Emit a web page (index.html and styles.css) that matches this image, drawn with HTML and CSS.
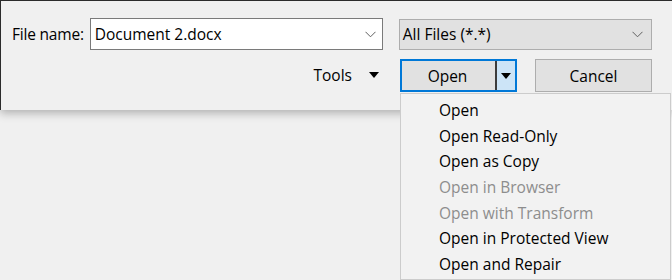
FILE: index.html
```html
<!DOCTYPE html>
<html lang="en">
<head>
    <meta charset="UTF-8">
    <title>Open</title>
    <link rel="stylesheet" href="styles.css">
</head>
<body>
    <div class="dialog">
        <div class="row">
            <label class="label" for="fileName">File name:</label>
            <div class="combo">
                <input type="text" id="fileName" value="Document 2.docx">
                <svg class="chevron" width="11" height="7" viewBox="0 0 11 7"><path d="M0.5 0.8 L5.5 5.8 L10.5 0.8" fill="none" stroke="#606060" stroke-width="1"/></svg>
            </div>
            <div class="filter">
                <span>All Files (*.*)</span>
                <svg class="chevron" width="11" height="7" viewBox="0 0 11 7"><path d="M0.5 0.8 L5.5 5.8 L10.5 0.8" fill="none" stroke="#606060" stroke-width="1"/></svg>
            </div>
        </div>
        <div class="row actions">
            <div class="tools">
                <span>Tools</span>
                <span class="caret"></span>
            </div>
            <div class="split">
                <span class="split-main">Open</span>
                <span class="split-arrow"><span class="caret"></span></span>
            </div>
            <button class="btn">Cancel</button>
        </div>
    </div>
    <ul class="menu">
        <li>Open</li>
        <li>Open Read-Only</li>
        <li>Open as Copy</li>
        <li class="disabled">Open in Browser</li>
        <li class="disabled">Open with Transform</li>
        <li>Open in Protected View</li>
        <li>Open and Repair</li>
    </ul>
</body>
</html>
```
FILE: styles.css
```css
* {
    margin: 0;
    padding: 0;
    box-sizing: border-box;
    font-family: "Open Sans", "Noto Sans", sans-serif;
}

body {
    width: 672px;
    height: 280px;
    background: #f0f0f0;
    color: #000;
    font-size: 15.5px;
    overflow: hidden;
    position: relative;
}

.dialog {
    height: 110px;
    background: #f0f0f0;
    border-top: 1px solid #2b2b2b;
    border-left: 1px solid #2b2b2b;
    box-shadow: 0 3px 9px rgba(0, 0, 0, 0.28);
    padding: 17px 20px 0 11px;
}

.row {
    display: flex;
    align-items: center;
}

.label {
    width: 78px;
    letter-spacing: -0.2px;
}

.combo {
    position: relative;
    width: 294px;
    height: 32px;
    border: 1px solid #7a7a7a;
    background: #fff;
}

.combo input {
    width: 100%;
    height: 100%;
    border: none;
    outline: none;
    padding: 0 28px 0 4px;
    font-size: 15.5px;
    background: transparent;
    color: #000;
}

.combo .chevron {
    position: absolute;
    right: 6px;
    top: 12px;
}

.filter {
    margin-left: 16px;
    width: 254px;
    height: 31px;
    border: 1px solid #adadad;
    background: #e1e1e1;
    display: flex;
    align-items: center;
    justify-content: space-between;
    padding: 0 8px 0 3px;
}

.actions {
    justify-content: flex-end;
    margin-top: 9px;
}

.tools {
    display: flex;
    align-items: center;
    gap: 17px;
    margin-right: 21px;
    padding-bottom: 1px;
}

.caret {
    width: 0;
    height: 0;
    border-left: 5px solid transparent;
    border-right: 5px solid transparent;
    border-top: 6px solid #000;
}

.split {
    display: flex;
    width: 117px;
    height: 33px;
    border: 2px solid #0078d7;
    background: #e1e1e1;
}

.split-main {
    flex: 1;
    display: flex;
    align-items: center;
    justify-content: center;
    border-right: 2px solid #3c3c3c;
    padding-right: 2px;
}

.split-arrow {
    width: 18px;
    background: #cce4f7;
    display: flex;
    align-items: center;
    justify-content: center;
}

.btn {
    margin-left: 18px;
    width: 117px;
    height: 33px;
    border: 1px solid #adadad;
    background: #e1e1e1;
    font-size: 15.5px;
    color: #000;
}

.menu {
    position: absolute;
    left: 400px;
    top: 93px;
    width: 271px;
    height: 187px;
    list-style: none;
    background: #f2f2f2;
    border: 1px solid #cccccc;
    padding-top: 4px;
}

.menu li {
    height: 25.67px;
    line-height: 25.67px;
    padding-left: 38px;
}

.menu .disabled {
    color: #8d8d8d;
}
```
